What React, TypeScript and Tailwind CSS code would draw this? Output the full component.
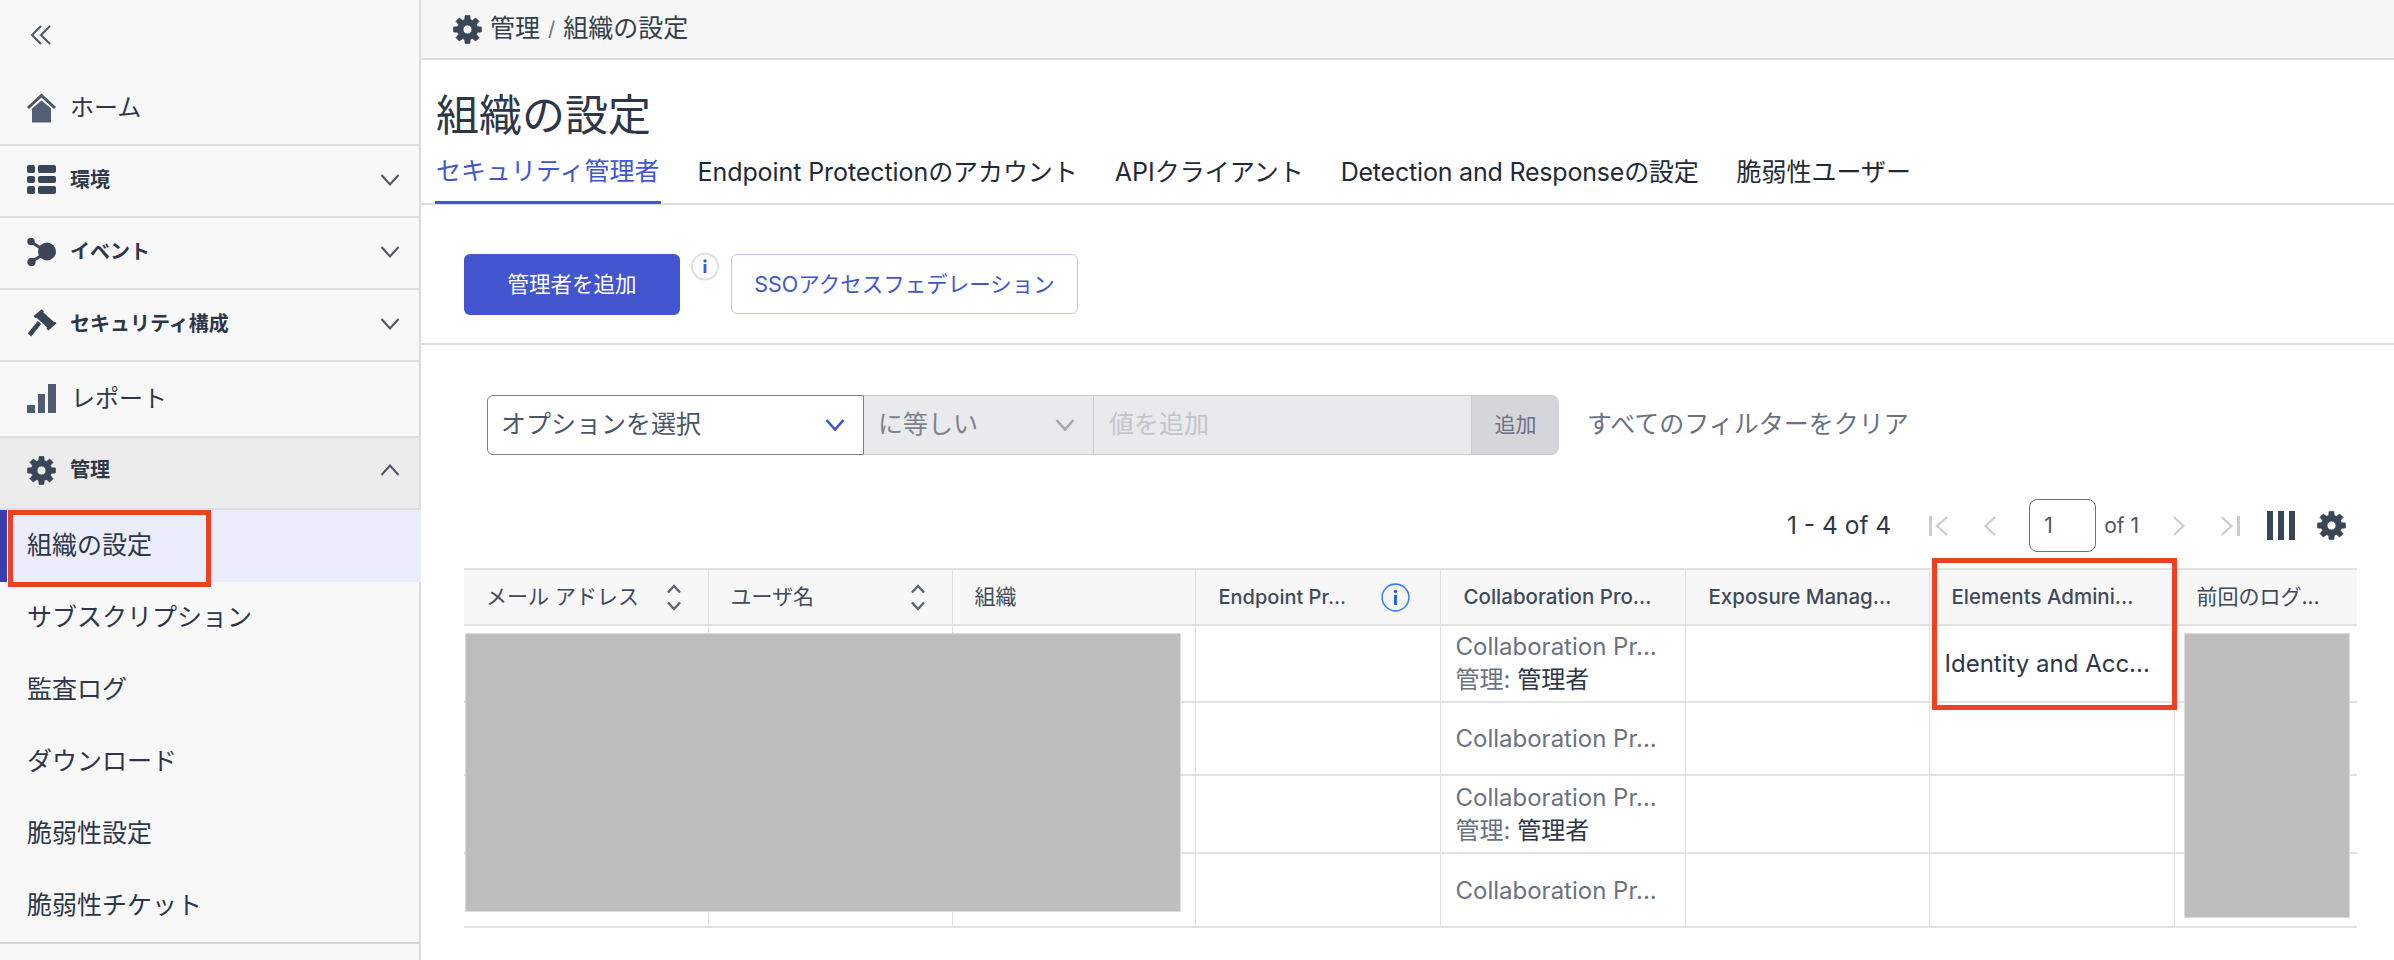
import React from "react";

const gearPath = (() => {
  const pts: string[] = [];
  const c = 15;
  const n = 8;
  for (let i = 0; i < n; i++) {
    const a = (i * 2 * Math.PI) / n - Math.PI / 2;
    const seg = [
      [-0.27, 10.6],
      [-0.17, 14.6],
      [0.17, 14.6],
      [0.27, 10.6],
    ];
    for (const [da, r] of seg) {
      pts.push(`${(c + r * Math.cos(a + da)).toFixed(2)} ${(c + r * Math.sin(a + da)).toFixed(2)}`);
    }
  }
  const hole = 4.6;
  return `M${pts.join("L")}Z M${c + hole} ${c}A${hole} ${hole} 0 1 0 ${c - hole} ${c}A${hole} ${hole} 0 1 0 ${c + hole} ${c}Z`;
})();

const Gear = ({ size = 29 }: { size?: number }) => (
  <svg width={size} height={size} viewBox="0 0 30 30">
    <path d={gearPath} fill="#3a4658" fillRule="evenodd" stroke="#3a4658" strokeWidth="0.8" strokeLinejoin="round" />
  </svg>
);

const Chevron = ({ up = false, color = "#4a5568", className = "", w = 2 }: { up?: boolean; color?: string; className?: string; w?: number }) => (
  <svg width="20" height="12" viewBox="0 0 20 12" fill="none" className={className}>
    <path d={up ? "M1.5 11L10 1.5L18.5 11" : "M1.5 1L10 10.5L18.5 1"} stroke={color} strokeWidth={w} />
  </svg>
);

const HomeIcon = () => (
  <svg width="30" height="30" viewBox="0 0 30 30">
    <path d="M1 15L14.5 2.5L28 15" fill="none" stroke="#4a5568" strokeWidth="3" />
    <path d="M5 15.5L14.5 7.5L24 15.5V29.5H5Z" fill="#525e72" />
  </svg>
);
const ListIcon = () => (
  <svg width="30" height="30" viewBox="0 0 30 30" fill="#3a4658">
    <rect x="0" y="0" width="8" height="8" rx="2" />
    <rect x="11" y="0" width="18" height="8" rx="2" />
    <rect x="0" y="11" width="8" height="7" rx="2" />
    <rect x="11" y="11" width="18" height="7" rx="2" />
    <rect x="0" y="21" width="8" height="8" rx="2" />
    <rect x="11" y="21" width="18" height="8" rx="2" />
  </svg>
);
const EventIcon = () => (
  <svg width="30" height="30" viewBox="0 0 30 30" fill="#3a4658">
    <path d="M4 5L20 15L4 25" fill="none" stroke="#3a4658" strokeWidth="3" />
    <circle cx="20" cy="14.5" r="9" />
    <circle cx="4" cy="4.5" r="3.7" />
    <circle cx="4.5" cy="25" r="4.2" />
  </svg>
);
const GavelIcon = () => (
  <svg width="30" height="30" viewBox="0 0 30 30" fill="#3a4658">
    <path d="M14.7 0.3L17 2.2L16.2 3.2L27 13L28 12.4L29.4 14.5L21.3 21.5L19.4 19.5L20.2 18.5L9.2 8.5L8.2 9.2L6.6 7Z" />
    <path d="M12.5 13.5L2.5 26" fill="none" stroke="#3a4658" strokeWidth="4.5" />
  </svg>
);
const BarsIcon = () => (
  <svg width="29" height="30" viewBox="0 0 29 30" fill="#505c70">
    <rect x="0" y="21" width="8" height="8" />
    <rect x="11" y="10" width="7" height="19" />
    <rect x="21" y="0" width="8" height="29" />
  </svg>
);

const SectionRow = ({ icon, label, up = false, active = false }: { icon: React.ReactNode; label: string; up?: boolean; active?: boolean }) => (
  <div className={`flex h-[72px] items-center border-b-2 border-[#dedede] pl-[27px] pr-[19px] ${active ? "bg-[#ececec] pb-[6px]" : "pb-[3px]"}`}>
    <div className="flex h-[30px] w-[43px] items-center">{icon}</div>
    <span className="text-[20px] font-bold text-[#2d3748]">{label}</span>
    <Chevron up={up} className="ml-auto" />
  </div>
);

const subItems = ["サブスクリプション", "監査ログ", "ダウンロード", "脆弱性設定", "脆弱性チケット"];

const Sidebar = () => (
  <aside className="relative w-[421px] shrink-0 border-r-2 border-[#dcdcdc] bg-[#f8f8f8]">
    <div className="flex h-[72px] items-start pl-[30px] pt-[25px]">
      <svg width="22" height="20" viewBox="0 0 22 20" fill="none" stroke="#4a5568" strokeWidth="2">
        <path d="M11 1L2 10L11 19" />
        <path d="M20 1L11 10L20 19" />
      </svg>
    </div>
    <div className="flex h-[74px] items-center border-b-2 border-[#dedede] pl-[27px] pb-[1px]">
      <div className="flex h-[30px] w-[43px] items-center">
        <HomeIcon />
      </div>
      <span className="text-[24px] text-[#2d3748]">ホーム</span>
    </div>
    <SectionRow icon={<ListIcon />} label="環境" />
    <SectionRow icon={<EventIcon />} label="イベント" />
    <SectionRow icon={<GavelIcon />} label="セキュリティ構成" />
    <div className="flex h-[76px] items-center border-b-2 border-[#dedede] pl-[27px]">
      <div className="flex h-[30px] w-[44px] items-center">
        <BarsIcon />
      </div>
      <span className="text-[24px] text-[#2d3748]">レポート</span>
    </div>
    <SectionRow icon={<Gear />} label="管理" up active />
    <div className="relative -mr-[2px] flex h-[72px] items-center border-l-[7px] border-[#3a3fb0] bg-[#ebedfb] pl-[20px] text-[25px] text-[#2d3748]">
      組織の設定
    </div>
    <div className="border-b-2 border-[#d4d4d4]">
      {subItems.map((s) => (
        <div key={s} className="flex h-[72px] items-center pl-[27px] text-[25px] text-[#2d3748]">
          {s}
        </div>
      ))}
    </div>
    <div className="absolute left-[8px] top-[510px] h-[77px] w-[203px] border-[5px] border-[#ee4124]" />
  </aside>
);

const tabs = [
  { t: "Endpoint Protectionのアカウント", c: "ml-[37px] tracking-[-0.08px]" },
  { t: "APIクライアント", c: "ml-[37px]" },
  { t: "Detection and Responseの設定", c: "ml-[37px] tracking-[-0.2px]" },
  { t: "脆弱性ユーザー", c: "ml-[38px]" },
];

const Pager = () => (
  <div className="mt-[44px] flex h-[53px] items-center justify-end pr-[48px] text-[#3a4658]">
    <span className="mr-[38px] text-[24.5px] text-[#2d3748]">1 - 4 of 4</span>
    <svg width="20" height="20" viewBox="0 0 20 20" fill="none" stroke="#c9ccd1" strokeWidth="2.2" className="mr-[35px]">
      <path d="M1.5 0V20" strokeWidth="3" />
      <path d="M18 1L8 10L18 19" />
    </svg>
    <svg width="12" height="20" viewBox="0 0 12 20" fill="none" stroke="#c9ccd1" strokeWidth="2.2" className="mr-[33px]">
      <path d="M11 1L1.5 10L11 19" />
    </svg>
    <div className="flex h-[53px] w-[67px] items-center rounded-[8px] border border-[#6b7280] pl-[14px] text-[21px] text-[#4a5568]">1</div>
    <span className="ml-[8px] mr-[34px] text-[21px] text-[#4a5568]">of 1</span>
    <svg width="12" height="20" viewBox="0 0 12 20" fill="none" stroke="#c9ccd1" strokeWidth="2.2" className="mr-[35px]">
      <path d="M1 1L10.5 10L1 19" />
    </svg>
    <svg width="20" height="20" viewBox="0 0 20 20" fill="none" stroke="#c9ccd1" strokeWidth="2.2" className="mr-[27px]">
      <path d="M1.5 1L11.5 10L1.5 19" />
      <path d="M18.5 0V20" strokeWidth="3" />
    </svg>
    <svg width="28" height="29" viewBox="0 0 28 29" fill="#3a4658" className="mr-[22px]">
      <rect x="0" y="0" width="6" height="29" />
      <rect x="11" y="0" width="6" height="29" />
      <rect x="22" y="0" width="6" height="29" />
    </svg>
    <Gear />
  </div>
);

const SortIcon = () => (
  <svg width="14" height="27" viewBox="0 0 14 27" fill="none" stroke="#5b6472" strokeWidth="2.4">
    <path d="M1 8.5L7 2L13 8.5" />
    <path d="M1 18.5L7 25L13 18.5" />
  </svg>
);

const colW = ["w-[244px]", "w-[244px]", "w-[243px]", "w-[245px]", "w-[245px]", "w-[244px]", "w-[245px]", "w-[183px]"];

const thCls = "h-[56px] border-r border-[#e0e0e0] pl-[22px] text-left text-[20.5px] font-medium text-[#3f4a5a] last:border-r-0";
const tdCls = "border-r border-[#e0e0e0] pl-[15px] align-middle text-[24px] leading-[33px] last:border-r-0";

const Collab = ({ role, first }: { role?: boolean; first?: boolean }) => (
  <div className={`whitespace-nowrap text-[#6b7280] ${first ? "pb-[2px]" : ""}`}>
    <div>Collaboration Pr...</div>
    {role && (
      <div>
        管理: <span className="text-[#2d3748]">管理者</span>
      </div>
    )}
  </div>
);

const rows: { h: string; role: boolean; id?: boolean }[] = [
  { h: "h-[77px]", role: true, id: true },
  { h: "h-[73px]", role: false },
  { h: "h-[78px]", role: true },
  { h: "h-[74px]", role: false },
];

const AdminTable = () => (
  <div className="relative ml-[43px] mt-[16px] w-[1893px]">
    <table className="w-[1893px] table-fixed border-collapse border-y-2 border-[#e2e2e2]">
      <colgroup>
        {colW.map((c, i) => (
          <col key={i} className={c} />
        ))}
      </colgroup>
      <thead>
        <tr className="border-b-2 border-[#e2e2e2] bg-[#f7f7f7]">
          <th className={thCls}>
            <div className="flex items-center text-[21px] font-normal">
              メール アドレス
              <span className="ml-[28px]"><SortIcon /></span>
            </div>
          </th>
          <th className={thCls}>
            <div className="flex items-center text-[21px] font-normal">
              ユーザ名
              <span className="ml-[97px]"><SortIcon /></span>
            </div>
          </th>
          <th className={thCls}><span className="text-[21px] font-normal">組織</span></th>
          <th className={`${thCls} pl-[23px]`}>
            <div className="flex items-center text-[20px]">
              Endpoint Pr...
              <svg width="29" height="29" viewBox="0 0 29 29" fill="none" className="ml-[35px]">
                <circle cx="14.5" cy="14.5" r="13.4" stroke="#3b82f6" strokeWidth="1.6" />
                <circle cx="14.5" cy="8.5" r="1.8" fill="#2563eb" />
                <rect x="13" y="12" width="3" height="10" fill="#2563eb" />
              </svg>
            </div>
          </th>
          <th className={`${thCls} pl-[23px]`}>Collaboration Pro...</th>
          <th className={`${thCls} pl-[23px]`}>Exposure Manag...</th>
          <th className={thCls}>Elements Admini...</th>
          <th className={thCls}><span className="text-[21px] font-normal">前回のログ...</span></th>
        </tr>
      </thead>
      <tbody>
        {rows.map((r, i) => (
          <tr key={i} className={`${r.h} border-b-2 border-[#e2e2e2] last:border-b-0`}>
            <td className={tdCls} />
            <td className={tdCls} />
            <td className={tdCls} />
            <td className={tdCls} />
            <td className={tdCls}><Collab role={r.role} first={i === 0} /></td>
            <td className={tdCls} />
            <td className={tdCls}>
              {r.id && <span className="whitespace-nowrap text-[#2d3748]">Identity and Acc...</span>}
            </td>
            <td className={tdCls} />
          </tr>
        ))}
      </tbody>
    </table>
    <div className="absolute left-[1px] top-[65px] h-[279px] w-[716px] border border-[#dcdcdc] bg-[#bebebe]" />
    <div className="absolute left-[1720px] top-[65px] h-[285px] w-[166px] border border-[#dcdcdc] bg-[#bebebe]" />
    <div className="absolute left-[1468px] top-[-10px] h-[152px] w-[245px] border-[5px] border-[#ee4124]" />
  </div>
);

export default function App() {
  return (
    <div className="flex h-[960px] w-[2394px] overflow-hidden bg-white font-['Inter','Noto_Sans_CJK_JP',sans-serif]">
      <Sidebar />
      <main className="min-w-0 flex-1">
        <div className="flex h-[60px] items-center border-b-2 border-[#dedede] bg-[#f7f7f7] pl-[32px] text-[25px] text-[#333f4d]">
          <Gear size={29} />
          <span className="ml-[8px]">管理</span>
          <span className="mx-[8px] text-[20px] text-[#6b7280]">/</span>
          <span>組織の設定</span>
        </div>
        <div className="h-[145px] border-b-2 border-[#dedede] pt-[31px]">
          <h1 className="h-[47px] pl-[15px] text-[43px] font-normal leading-[48px] text-[#2d3748]">組織の設定</h1>
          <div className="flex h-[65px] pl-[14px] text-[25px]">
            <div className="flex h-[66px] items-center border-b-[3px] border-[#4256d0] px-[1px] pt-[4px] text-[#4256d0]">セキュリティ管理者</div>
            {tabs.map((t) => (
              <div key={t.t} className={`flex h-[66px] items-center pt-[4px] text-[#1f2a37] ${t.c}`}>
                {t.t}
              </div>
            ))}
          </div>
        </div>
        <div className="flex h-[140px] items-start border-b-2 border-[#dedede] pl-[43px] pt-[49px]">
          <button className="flex h-[61px] w-[216px] items-center justify-center rounded-[6px] bg-[#4356d0] text-[21.5px] text-white">管理者を追加</button>
          <svg width="28" height="29" viewBox="0 0 28 29" fill="none" className="ml-[11px] mt-[-2px]">
            <circle cx="14" cy="14.5" r="13" fill="#fff" stroke="#dde0e5" strokeWidth="2" />
            <circle cx="14" cy="9" r="1.7" fill="#2f5fdc" />
            <rect x="12.6" y="12" width="2.8" height="9" fill="#2f5fdc" />
          </svg>
          <button className="ml-[12px] flex h-[60px] w-[347px] items-center justify-center rounded-[6px] border border-[#b8c4ff] bg-white text-[21.5px] text-[#4256d0]">SSOアクセスフェデレーション</button>
        </div>
        <div className="ml-[66px] mt-[50px] flex h-[60px] items-center">
          <div className="flex h-[60px] w-[377px] items-center rounded-l-[6px] border border-[#7b828e] pl-[13px] pr-[18px] text-[25px] text-[#4a5568]">
            オプションを選択
            <Chevron color="#3f51d1" className="ml-auto" w={2.6} />
          </div>
          <div className="flex h-[60px] w-[230px] items-center border-y border-r border-[#c9cbcf] bg-[#e9eaec] pl-[14px] pr-[18px] text-[25px] text-[#7b828e]">
            に等しい
            <Chevron color="#a4a8af" className="ml-auto" w={2.6} />
          </div>
          <div className="flex h-[60px] w-[378px] items-center border-y border-r border-[#c9cbcf] bg-[#e9eaec] pl-[15px] text-[25px] text-[#c2c5ca]">値を追加</div>
          <div className="flex h-[60px] w-[87px] items-center justify-center rounded-r-[8px] border-y border-[#c9cbcf] bg-[#d5d6da] text-[21px] text-[#6b7280]">追加</div>
          <span className="ml-[28px] text-[25px] text-[#6b7280]">すべてのフィルターをクリア</span>
        </div>
        <Pager />
        <AdminTable />
      </main>
    </div>
  );
}
